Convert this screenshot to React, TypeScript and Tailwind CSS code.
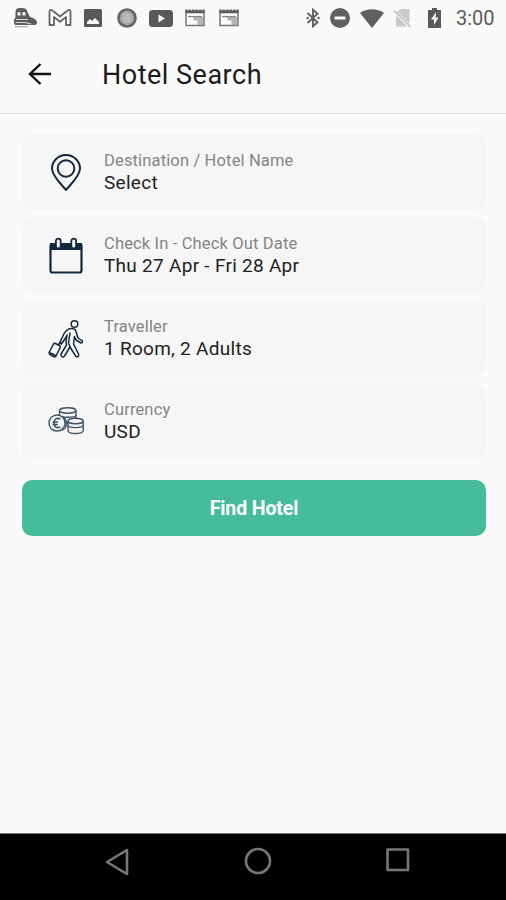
import type { ReactNode } from "react";

const INK = "#14293d";

function Icon({ box, className, children }: { box: string; className: string; children: ReactNode }) {
  return (
    <svg viewBox={box} className={`block shrink-0 ${className}`} fill="none" aria-hidden="true">
      {children}
    </svg>
  );
}

function EventIcon({ className }: { className: string }) {
  return (
    <Icon box="0 0 20 20" className={className}>
      <path d="M1 2.5H19V17.5H1Z" stroke="#777" strokeWidth="1.5" />
      <path d="M.3 3.5H19.7" stroke="#5c5c5c" strokeWidth="3.6" />
      <path d="M3 .5v2M6.5.5v2M10 .5v2M13.5.5v2M17 .5v2" stroke="#fafafa" strokeWidth="1" />
      <path d="M8.5 9H18V17H12.5V12.5H8.5Z" fill="#b4b4b4" />
      <path d="M3 8.6H17" stroke="#888" strokeWidth="1.3" />
    </Icon>
  );
}

function StatusBar() {
  return (
    <div className="flex h-9 shrink-0 items-center pl-[13px] pr-[11px]">
      <Icon box="0 0 25 20" className="h-5 w-[25px]">
        <path d="M4 .5Q8-.6 12 .5Q14 1 14.5 4L17 9Q24 11 24 14.5Q24 17 21 17H3Q1 17 1 14V12L2.5 9V4Q2.5 1 4 .5Z" fill="#5c5c5c" />
        <path d="M4.5 4.2H7.5V7.5H4.5ZM9.5 4.2H12.5V7.5H9.5Z" fill="#fafafa" />
        <path d="M3 11.5H15M2.5 14.5H12L18 16" stroke="#d5d5d5" strokeWidth="1.2" />
        <path d="M2 18.7H15" stroke="#aaa" strokeWidth="1.3" />
      </Icon>
      <Icon box="0 0 24 18" className="ml-[10px] h-[18px] w-6">
        <path d="M1.5 16V2.5Q2-.5 5 2L12 7.5L19 2Q22-.5 22.5 2.5V16H18V8L12 12.7L6 8V16Z" stroke="#666" strokeWidth="1.8" strokeLinejoin="round" />
      </Icon>
      <Icon box="0 0 18 18" className="ml-3 h-[18px] w-[18px]">
        <rect width="18" height="18" rx="1.5" fill="#595959" />
        <path d="M3 15V13L6 10L8 12L11 9L15 13V15Z" fill="#fafafa" />
      </Icon>
      <Icon box="0 0 20 20" className="ml-[15px] h-5 w-5">
        <circle cx="10" cy="10" r="8.5" fill="#aaa" stroke="#666" strokeWidth="2.7" />
        <circle cx="10" cy="10" r="5.5" fill="#b8b8b8" stroke="#a5a5a5" />
      </Icon>
      <Icon box="0 0 24 17" className="ml-3 h-[17px] w-6">
        <rect width="24" height="17" rx="3.5" fill="#595959" />
        <path d="M9.5 4.5V12.5L16 8.5Z" fill="#fff" />
      </Icon>
      <EventIcon className="ml-3 h-5 w-5" />
      <EventIcon className="ml-[14px] h-5 w-5" />

      <div className="ml-auto flex items-center">
        <Icon box="0 0 14 20" className="h-5 w-[14px]">
          <path d="M1.5 5L11.5 14.2L7 18.3V1.7L11.5 5.8L1.5 15" stroke="#606060" strokeWidth="1.9" />
          <circle cx="1.6" cy="10" r="1.2" fill="#606060" />
          <circle cx="12.6" cy="10" r="1.2" fill="#606060" />
        </Icon>
        <Icon box="0 0 20 20" className="ml-[10px] h-5 w-5">
          <circle cx="10" cy="10" r="10" fill="#606060" />
          <rect x="4.5" y="8.5" width="11" height="3" rx=".5" fill="#fafafa" />
        </Icon>
        <Icon box="0 0 24 19" className="ml-[10px] h-[19px] w-6">
          <path d="M0 4C7-1 17-1 24 4L12 19Z" fill="#606060" />
        </Icon>
        <Icon box="0 0 19 20" className="ml-[9px] h-5 w-[19px]">
          <path d="M7.5 1H16.5V16L4.5 4ZM3 7L14 18.5H3Z" fill="#c9c9c9" />
          <path d="M1 2.5L17.5 19" stroke="#bdbdbd" strokeWidth="1.6" />
        </Icon>
        <Icon box="0 0 13 20" className="ml-[16px] h-5 w-[13px]">
          <path d="M4 0H9V2H13V20H0V2H4Z" fill="#595959" />
          <path d="M8 4L3 11.5H6V17L10.5 9.5H7.5Z" fill="#fafafa" />
        </Icon>
        <span className="ml-[15px] w-[39px] whitespace-nowrap text-[20px] leading-9 text-[#5c5c5c]">3:00</span>
      </div>
    </div>
  );
}

const pinIcon = (
  <Icon box="0 0 36 38" className="h-[38px] w-9">
    <path d="M18 36C14 31 4 22 4 14.5A14 13.5 0 0 1 32 14.5C32 22 22 31 18 36Z" stroke={INK} strokeWidth="2" strokeLinejoin="round" />
    <circle cx="18" cy="14.5" r="8.3" stroke={INK} strokeWidth="2" />
  </Icon>
);

const calendarIcon = (
  <Icon box="0 0 36 38" className="h-[38px] w-9">
    <rect x="2.5" y="7" width="31" height="28.5" rx="2" stroke={INK} strokeWidth="2.2" />
    <path d="M2 6H34V13H2Z" fill={INK} />
    <rect x="7.9" y="1.7" width="4.8" height="9.8" rx="2.4" fill="#f6f6f6" stroke={INK} strokeWidth="1.8" />
    <rect x="23.3" y="1.7" width="4.8" height="9.8" rx="2.4" fill="#f6f6f6" stroke={INK} strokeWidth="1.8" />
  </Icon>
);

const travellerIcon = (
  <Icon box="0 0 36 40" className="h-10 w-9">
    <g stroke={INK} strokeWidth="1.5" strokeLinejoin="round" strokeLinecap="round">
      <circle cx="26.5" cy="5" r="3.3" />
      <path d="M24 9.5C20 9 16 13 14.5 18L11.5 24L13.5 25L17.5 19L19 16L18 23L18.5 26L13 35C12.5 38 15.5 39 16.5 37L22 28L27 36C28 39 31.5 38 30.5 35L25.5 25L26.5 17.5L28 21L33 24C35 24 35 21.5 33 21L30 19L28 12.5C27.5 10.5 26 9.5 24 9.5Z" />
      <path d="M22 14L20.5 24M22 28L21 25" />
      <path d="M7.5 24.5L11.5 26.5C12.5 27 12.5 28 12 29L8 37C7.5 38 6.5 38 5.5 37.5L2 35.5C1 35 1 34 1.3 33L5 26C5.5 24.5 6.5 24 7.5 24.5Z" />
      <path d="M10 26L13 23M2.5 34L7.5 36.5" />
    </g>
  </Icon>
);

const currencyIcon = (
  <Icon box="0 0 36 38" className="h-[38px] w-9">
    <g stroke="#415566" strokeWidth="1.4" fill="#f6f6f6">
      <path d="M11.5 7.5V17C11.5 21 28 21 28 17V7.5" />
      <ellipse cx="19.7" cy="7.5" rx="8.2" ry="2.7" />
      <path d="M11.5 12C11.5 15 28 15 28 12" />
      <path d="M20 18V27.5C20 31.5 35.2 31.5 35.2 27.5V18" />
      <ellipse cx="27.6" cy="18" rx="7.6" ry="2.8" />
      <path d="M20 22C20 25.5 35.2 25.5 35.2 22" />
      <circle cx="9" cy="20" r="8" />
      <path d="M14 13C20 17 20 24 14 27.5" fill="none" />
      <path d="M12.5 16C8 14 6 17 6 20S8 26 12.5 24M4.5 19H10M4.5 21.5H10" fill="none" strokeWidth="1.6" />
    </g>
  </Icon>
);

const fields = [
  { icon: pinIcon, label: "Destination / Hotel Name", value: "Select" },
  { icon: calendarIcon, label: "Check In - Check Out Date", value: "Thu 27 Apr - Fri 28 Apr" },
  { icon: travellerIcon, label: "Traveller", value: "1 Room, 2 Adults" },
  { icon: currencyIcon, label: "Currency", value: "USD" },
];

export default function App() {
  return (
    <div className="flex h-[900px] w-full flex-col overflow-hidden bg-[#fafafa] font-['Roboto',sans-serif]">
      <StatusBar />
      <header className="flex h-[78px] shrink-0 items-center border-b border-[#e2e2e2] pl-7">
        <Icon box="0 0 24 24" className="mb-[2px] h-6 w-6">
          <path d="M12.5 2L2 12L12.5 22M2 12H23" stroke="#111" strokeWidth="2.4" />
        </Icon>
        <h1 className="ml-[50px] pt-[2px] text-[27px] font-normal leading-none tracking-[0.5px] text-[#1c1c1c]">Hotel Search</h1>
      </header>
      <main className="flex flex-1 flex-col pl-[22px] pr-[20px] pt-5">
        <div className="flex flex-col gap-[7px]">
          {fields.map((field) => (
            <button key={field.label} className="flex h-[76px] items-center rounded-[10px] bg-[#f6f6f6] pl-[26px] pt-px text-left">
              {field.icon}
              <span className="ml-5 flex flex-col pb-px">
                <span className="text-[16.5px] leading-[22px] tracking-[0.15px] text-[#858585]">{field.label}</span>
                <span className="text-[19px] leading-[22px] tracking-[0.28px] text-[#222]">{field.value}</span>
              </span>
            </button>
          ))}
        </div>
        <button className="mt-[21px] h-14 rounded-[10px] bg-[#46bd9a] pt-[2px] text-[19.5px] font-bold tracking-[-0.1px] text-white">Find Hotel</button>
      </main>
      <nav className="flex h-[67px] shrink-0 border-t border-[#777] bg-black pl-[105px] pt-[13px]">
        <Icon box="0 0 26 28" className="h-7 w-[26px]">
          <path d="M22 3V27L2 15Z" stroke="#777" strokeWidth="2.6" strokeLinejoin="round" />
        </Icon>
        <Icon box="0 0 28 28" className="ml-[113px] h-7 w-7">
          <circle cx="14" cy="14" r="12" stroke="#777" strokeWidth="2.6" />
        </Icon>
        <Icon box="0 0 26 26" className="ml-[113px] h-[26px] w-[26px]">
          <path d="M2.5 2.5H23V23H2.5Z" stroke="#777" strokeWidth="2.6" strokeLinejoin="round" />
        </Icon>
      </nav>
    </div>
  );
}
